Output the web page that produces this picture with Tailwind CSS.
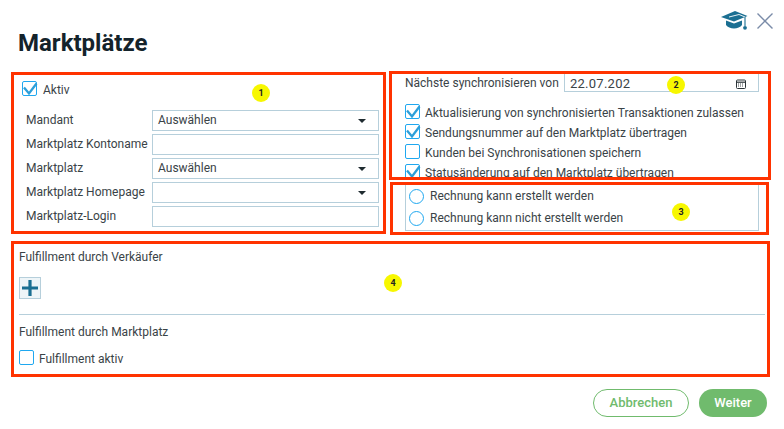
<!DOCTYPE html>
<html lang="de">
<head>
<meta charset="utf-8">
<script src="https://cdn.jsdelivr.net/npm/@tailwindcss/browser@4"></script>
</head>
<body class="bg-white">
<div class="relative w-[784px] h-[429px] overflow-hidden bg-white font-['Roboto',sans-serif] text-[12px] leading-[14px] text-[#3a4347]">

  <header class="relative h-[72px] pl-[18px] pt-[27px]">
    <h1 class="text-[24px] leading-[32px] font-bold text-[#14232b]">Marktplätze</h1>
    <div class="absolute left-[721px] top-[11px] flex items-start gap-[9px]">
      <svg class="w-[27px] h-[20px]" viewBox="0 0 27 20"><path d="M14 0 L26.5 5 L13 10.5 L0 6 Z" fill="#1b6f92"/><path d="M5 9.5 L13 12.5 L21 9.5 V14 C18 18.5 8 18.5 5 14 Z" fill="#1b6f92"/><path d="M8 6 L18 3.5 L24 6" fill="none" stroke="#fff" stroke-width="0.9"/><path d="M24 6 V15" stroke="#1b6f92" stroke-width="1.1"/><circle cx="24" cy="16.8" r="1.9" fill="#1b6f92"/></svg>
      <svg class="w-[16px] h-[16px] mt-[2px]" viewBox="0 0 16 16"><path d="M0.5 0.5 L15.5 15.5 M15.5 0.5 L0.5 15.5" stroke="#7a8ba8" stroke-width="1.4" fill="none"/></svg>
    </div>
  </header>

  <main class="pl-[11px]">
    <div class="flex items-start">
      <section class="w-[375px] h-[162px] border-[3px] border-[#ff3300] pl-[8px] pr-[3px] pt-[6px]">
        <label class="flex items-center gap-[6px] h-[15px]">
          <span class="relative w-[15px] h-[15px] rounded-[2px] border-[1.25px] border-[#1fa8f0]">
            <svg class="absolute left-[-1px] top-[-1px] w-[15px] h-[15px] overflow-visible" viewBox="0 0 15 15"><path d="M2 6.5 L7 12.5 L14.5 2.5" fill="none" stroke="#2d9fd9" stroke-width="2.3"/></svg>
          </span>
          <span class="translate-y-px">Aktiv</span>
        </label>
        <div class="mt-[14px] flex flex-col gap-[3px] pl-[4px] pr-[1px]">
          <div class="flex items-center h-[21px]"><span class="w-[126px] -translate-y-px">Mandant</span><div class="flex-1 h-[21px] border border-[#b6cfdb] flex items-center justify-between pl-[5px] pr-[12px]"><span class="-translate-y-px">Auswählen</span><span class="w-0 h-0 border-x-[4px] border-x-transparent border-t-[4px] border-t-[#1f2b30]"></span></div></div>
          <div class="flex items-center h-[21px]"><span class="w-[126px] -translate-y-px">Marktplatz Kontoname</span><div class="flex-1 h-[21px] border border-[#b6cfdb]"></div></div>
          <div class="flex items-center h-[21px]"><span class="w-[126px] -translate-y-px">Marktplatz</span><div class="flex-1 h-[21px] border border-[#b6cfdb] flex items-center justify-between pl-[5px] pr-[12px]"><span class="-translate-y-px">Auswählen</span><span class="w-0 h-0 border-x-[4px] border-x-transparent border-t-[4px] border-t-[#1f2b30]"></span></div></div>
          <div class="flex items-center h-[21px]"><span class="w-[126px] -translate-y-px">Marktplatz Homepage</span><div class="flex-1 h-[21px] border border-[#b6cfdb] flex items-center justify-end pr-[12px]"><span class="w-0 h-0 border-x-[4px] border-x-transparent border-t-[4px] border-t-[#1f2b30]"></span></div></div>
          <div class="flex items-center h-[21px]"><span class="w-[126px] -translate-y-px">Marktplatz-Login</span><div class="flex-1 h-[21px] border border-[#b6cfdb]"></div></div>
        </div>
      </section>

      <div class="ml-[3px] w-[382px] -mt-[1px]">
        <section class="h-[109px] overflow-hidden border-[3px] border-[#ff3300] pl-[13px] pr-[9px]">
          <div class="flex items-start h-[20px]">
            <span class="w-[159px] pt-[2px]">Nächste synchronisieren von</span>
            <div class="w-[195px] h-[20px] -mt-[2px] border border-[#b6cfdb] flex items-center justify-between pl-[5px] pr-[12px] pt-[4px]">
              <span class="text-[13px] tracking-[0.25px]">22.07.202</span>
              <svg class="w-[10px] h-[10px]" viewBox="0 0 10 10"><rect x="0.5" y="1" width="9" height="8.5" rx="1" fill="none" stroke="#2b3438" stroke-width="1"/><path d="M0.5 3.2 H9.5" stroke="#2b3438" stroke-width="1.2"/><path d="M2 5 H8 M2 7 H8" stroke="#2b3438" stroke-width="0.9" stroke-dasharray="1 1"/></svg>
            </div>
          </div>
          <div class="mt-[10px] flex flex-col gap-[5px]">
            <label class="flex items-center gap-[5px] h-[15px]"><span class="relative shrink-0 w-[15px] h-[15px] rounded-[2px] border-[1.25px] border-[#1fa8f0]"><svg class="absolute left-[-1px] top-[-1px] w-[15px] h-[15px] overflow-visible" viewBox="0 0 15 15"><path d="M2 6.5 L7 12.5 L14.5 2.5" fill="none" stroke="#2d9fd9" stroke-width="2.3"/></svg></span><span class="translate-y-px">Aktualisierung von synchronisierten Transaktionen zulassen</span></label>
            <label class="flex items-center gap-[5px] h-[15px]"><span class="relative shrink-0 w-[15px] h-[15px] rounded-[2px] border-[1.25px] border-[#1fa8f0]"><svg class="absolute left-[-1px] top-[-1px] w-[15px] h-[15px] overflow-visible" viewBox="0 0 15 15"><path d="M2 6.5 L7 12.5 L14.5 2.5" fill="none" stroke="#2d9fd9" stroke-width="2.3"/></svg></span><span class="translate-y-px">Sendungsnummer auf den Marktplatz übertragen</span></label>
            <label class="flex items-center gap-[5px] h-[15px]"><span class="shrink-0 w-[15px] h-[15px] rounded-[2px] border-[1.25px] border-[#1fa8f0]"></span><span class="translate-y-px">Kunden bei Synchronisationen speichern</span></label>
            <label class="flex items-center gap-[5px] h-[15px]"><span class="relative shrink-0 w-[15px] h-[15px] rounded-[2px] border-[1.25px] border-[#1fa8f0]"><svg class="absolute left-[-1px] top-[-1px] w-[15px] h-[15px] overflow-visible" viewBox="0 0 15 15"><path d="M2 6.5 L7 12.5 L14.5 2.5" fill="none" stroke="#2d9fd9" stroke-width="2.3"/></svg></span><span class="translate-y-px">Statusänderung auf den Marktplatz übertragen</span></label>
          </div>
        </section>
        <section class="mt-[2px] ml-[1px] w-[379px] h-[53px] border-[3px] border-[#ff3300] pl-[12px] pr-[7px]">
          <div class="h-[46px] border-x border-b border-[#b6cfdb] pl-[3px] pt-[4px] flex flex-col gap-[7px]">
            <label class="flex items-center gap-[6px] h-[15px]"><span class="shrink-0 w-[15px] h-[15px] rounded-full border-[1.25px] border-[#1fa8f0]"></span><span class="-translate-y-px">Rechnung kann erstellt werden</span></label>
            <label class="flex items-center gap-[6px] h-[15px]"><span class="shrink-0 w-[15px] h-[15px] rounded-full border-[1.25px] border-[#1fa8f0]"></span><span class="-translate-y-px">Rechnung kann nicht erstellt werden</span></label>
          </div>
        </section>
      </div>
    </div>

    <section class="mt-[6px] w-[759px] h-[136px] border-[3px] border-[#ff3300] pl-[5px] pr-[2px] pt-[6px]">
      <h2 class="h-[14px]">Fulfillment durch Verkäufer</h2>
      <div class="mt-[13px] w-[22px] h-[22px] border border-[#b6cfdb] bg-[#eef5f8] flex items-center justify-center">
        <svg class="w-[16px] h-[16px]" viewBox="0 0 16 16"><path d="M8 0 V16 M0 8 H16" stroke="#1b6f92" stroke-width="3.2"/></svg>
      </div>
      <div class="mt-[15px] h-px bg-[#b6cfdb]"></div>
      <h2 class="mt-[10px] h-[14px]">Fulfillment durch Marktplatz</h2>
      <label class="mt-[11px] flex items-center gap-[5px] h-[15px]"><span class="shrink-0 w-[15px] h-[15px] rounded-[2px] border-[1.25px] border-[#1fa8f0]"></span><span class="translate-y-px">Fulfillment aktiv</span></label>
    </section>
  </main>

  <footer class="mt-[12px] flex justify-end gap-[10px] pr-[17px]">
    <button class="w-[96px] h-[28px] rounded-full border border-[#70bb6d] bg-white text-[#70bb6d] text-[13px] font-medium">Abbrechen</button>
    <button class="w-[68px] h-[28px] rounded-full bg-[#70bb6d] text-white text-[13px] font-medium">Weiter</button>
  </footer>

  <span class="absolute left-[252px] top-[84px] w-[18px] h-[18px] rounded-full bg-[#f7f700] flex items-center justify-center text-[9px] font-bold text-[#222]">1</span>
  <span class="absolute left-[667px] top-[76px] w-[18px] h-[18px] rounded-full bg-[#f7f700] flex items-center justify-center text-[9px] font-bold text-[#222]">2</span>
  <span class="absolute left-[672px] top-[203px] w-[18px] h-[18px] rounded-full bg-[#f7f700] flex items-center justify-center text-[9px] font-bold text-[#222]">3</span>
  <span class="absolute left-[384px] top-[274px] w-[18px] h-[18px] rounded-full bg-[#f7f700] flex items-center justify-center text-[9px] font-bold text-[#222]">4</span>
</div>
</body>
</html>
